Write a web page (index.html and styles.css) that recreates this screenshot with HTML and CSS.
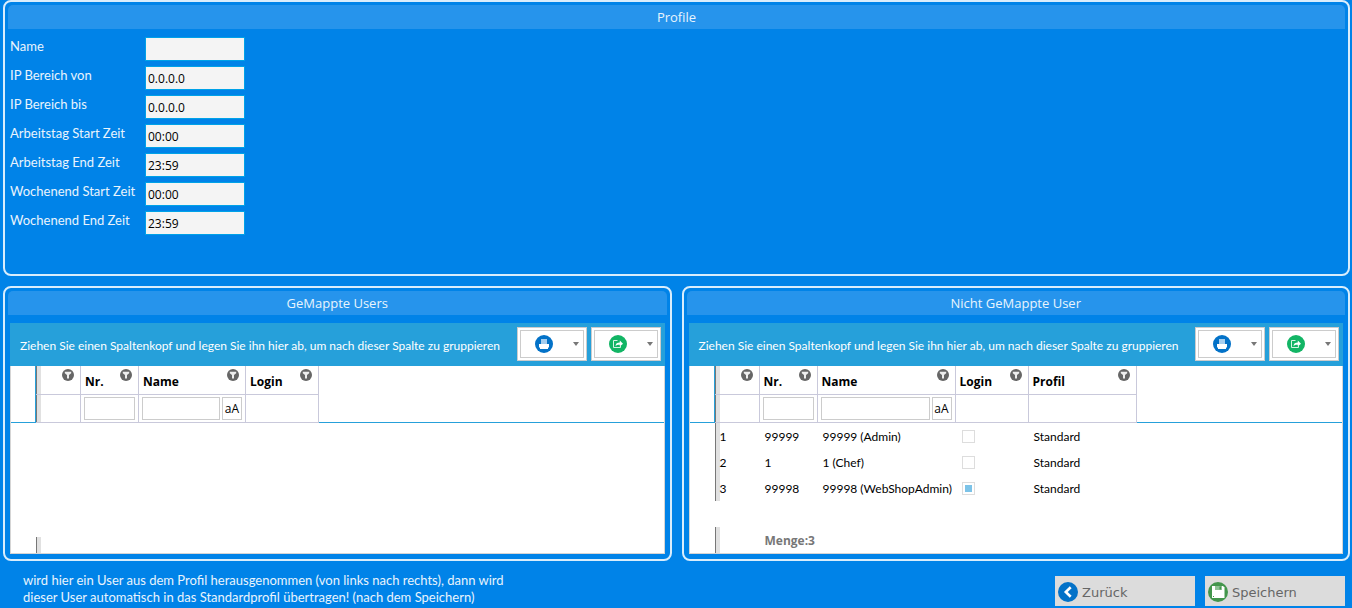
FILE: index.html
```html
<!DOCTYPE html>
<html lang="de">
<head>
<meta charset="utf-8">
<title>Profile</title>
<link rel="stylesheet" href="styles.css">
</head>
<body>
<svg class="sprites" aria-hidden="true">
  <symbol id="i-filter" viewBox="0 0 12 12"><circle cx="6" cy="6" r="6" fill="#666"/><path d="M2.8 2.8h6.400v1.400L7 6v3.400H5V6L2.800 4.200z" fill="#eee"/></symbol>
  <symbol id="i-print" viewBox="0 0 18 18"><circle cx="9" cy="9" r="9" fill="#0372c8"/><path d="M6 4h6v5H6z" fill="#a5cdee"/><path d="M4 9h10v3.500H13V14H5v-1.500H4z" fill="#fff"/></symbol>
  <symbol id="i-export" viewBox="0 0 18 18"><circle cx="9" cy="9" r="9" fill="#12b565"/><path d="M8.500 5.500h-4v7h7v-1.500" fill="none" stroke="#d5f3e3"/><path d="M6.500 11c.2-2.500 1.700-3.600 4.300-3.600V5.600L14 8.800l-3.200 2.800V9.700C8.900 9.600 7.700 9.900 6.500 11z" fill="#fff"/></symbol>
  <symbol id="i-back" viewBox="0 0 20 20"><circle cx="10" cy="10" r="10" fill="#0372c8"/><path d="M12.700 5.200 7.800 10l4.900 4.800" fill="none" stroke="#fff" stroke-width="2.600"/></symbol>
  <symbol id="i-save" viewBox="0 0 20 20"><circle cx="10" cy="10" r="10" fill="#43964c"/><path d="M4 4h11l1.500 1.500V16H4z" fill="#fff"/><path d="M7 4h7v4H7z" fill="#8fc295"/><path d="M11.500 4.500h1.500v3h-1.500z" fill="#43964c"/><path d="M5 14h1v1H5z" fill="#43964c"/></symbol>
</svg>
<main class="page">
  <section class="panel">
    <h1 class="panel-title">Profile</h1>
    <form class="fields">
      <label for="name">Name</label><input id="name" type="text">
      <label for="ip-from">IP Bereich von</label><input id="ip-from" type="text" value="0.0.0.0">
      <label for="ip-to">IP Bereich bis</label><input id="ip-to" type="text" value="0.0.0.0">
      <label for="work-start">Arbeitstag Start Zeit</label><input id="work-start" type="text" value="00:00">
      <label for="work-end">Arbeitstag End Zeit</label><input id="work-end" type="text" value="23:59">
      <label for="weekend-start">Wochenend Start Zeit</label><input id="weekend-start" type="text" value="00:00">
      <label for="weekend-end">Wochenend End Zeit</label><input id="weekend-end" type="text" value="23:59">
    </form>
  </section>

  <div class="columns">
    <section class="panel">
      <h2 class="panel-title">GeMappte Users</h2>
      <div class="grid">
        <div class="group-bar">
          <span>Ziehen Sie einen Spaltenkopf und legen Sie ihn hier ab, um nach dieser Spalte zu gruppieren</span>
          <button class="tool" type="button" aria-label="Drucken"><span class="tool-face"><svg class="tool-icon"><use href="#i-print"/></svg><span class="caret"></span></span></button>
          <button class="tool" type="button" aria-label="Exportieren"><span class="tool-face"><svg class="tool-icon"><use href="#i-export"/></svg><span class="caret"></span></span></button>
        </div>
        <table class="table">
          <colgroup><col class="c-gutter"><col class="c-handle"><col class="c-nr"><col class="c-name"><col class="c-login"><col></colgroup>
          <thead>
            <tr class="head">
              <td class="gutter" rowspan="2"></td>
              <th class="handle"><span class="head-cell"><svg class="funnel"><use href="#i-filter"/></svg></span></th>
              <th><span class="head-cell">Nr.<svg class="funnel"><use href="#i-filter"/></svg></span></th>
              <th><span class="head-cell">Name<svg class="funnel"><use href="#i-filter"/></svg></span></th>
              <th><span class="head-cell">Login<svg class="funnel"><use href="#i-filter"/></svg></span></th>
              <td class="rest" rowspan="2"></td>
            </tr>
            <tr class="filter">
              <td class="handle"></td>
              <td><span class="filter-cell"><input type="text" aria-label="Filter Nr."></span></td>
              <td><span class="filter-cell"><input type="text" aria-label="Filter Name"><button type="button">aA</button></span></td>
              <td></td>
            </tr>
          </thead>
        </table>
        <div class="summary summary-empty"></div>
      </div>
    </section>

    <section class="panel">
      <h2 class="panel-title">Nicht GeMappte User</h2>
      <div class="grid">
        <div class="group-bar">
          <span>Ziehen Sie einen Spaltenkopf und legen Sie ihn hier ab, um nach dieser Spalte zu gruppieren</span>
          <button class="tool" type="button" aria-label="Drucken"><span class="tool-face"><svg class="tool-icon"><use href="#i-print"/></svg><span class="caret"></span></span></button>
          <button class="tool" type="button" aria-label="Exportieren"><span class="tool-face"><svg class="tool-icon"><use href="#i-export"/></svg><span class="caret"></span></span></button>
        </div>
        <table class="table">
          <colgroup><col class="c-gutter"><col class="c-handle"><col class="c-nr"><col class="c-name-wide"><col class="c-login"><col class="c-profile"><col></colgroup>
          <thead>
            <tr class="head">
              <td class="gutter" rowspan="2"></td>
              <th class="handle"><span class="head-cell"><svg class="funnel"><use href="#i-filter"/></svg></span></th>
              <th><span class="head-cell">Nr.<svg class="funnel"><use href="#i-filter"/></svg></span></th>
              <th><span class="head-cell">Name<svg class="funnel"><use href="#i-filter"/></svg></span></th>
              <th><span class="head-cell">Login<svg class="funnel"><use href="#i-filter"/></svg></span></th>
              <th><span class="head-cell">Profil<svg class="funnel"><use href="#i-filter"/></svg></span></th>
              <td class="rest" rowspan="2"></td>
            </tr>
            <tr class="filter">
              <td class="handle"></td>
              <td><span class="filter-cell"><input type="text" aria-label="Filter Nr."></span></td>
              <td><span class="filter-cell"><input type="text" aria-label="Filter Name"><button type="button">aA</button></span></td>
              <td></td>
              <td></td>
            </tr>
          </thead>
          <tbody>
            <tr><td></td><td class="handle">1</td><td>99999</td><td>99999 (Admin)</td><td><input type="checkbox" aria-label="Login 99999"></td><td>Standard</td><td></td></tr>
            <tr><td></td><td class="handle">2</td><td>1</td><td>1 (Chef)</td><td><input type="checkbox" aria-label="Login 1"></td><td>Standard</td><td></td></tr>
            <tr><td></td><td class="handle">3</td><td>99998</td><td>99998 (WebShopAdmin)</td><td><input type="checkbox" aria-label="Login 99998" checked></td><td>Standard</td><td></td></tr>
          </tbody>
        </table>
        <div class="summary">Menge:3</div>
      </div>
    </section>
  </div>

  <footer class="footer">
    <p class="hint">wird hier ein User aus dem Profil herausgenommen (von links nach rechts), dann wird<br>dieser User automatisch in das Standardprofil übertragen! (nach dem Speichern)</p>
    <button class="action" type="button"><svg class="action-icon"><use href="#i-back"/></svg>Zurück</button>
    <button class="action" type="button"><svg class="action-icon"><use href="#i-save"/></svg>Speichern</button>
  </footer>
</main>
</body>
</html>
```
FILE: styles.css
```css
* { box-sizing: border-box; }
body {
  margin: 0;
  background: #0083e8;
  color: #e9f4fd;
  font: 12px/17px "Open Sans", sans-serif;
}
input, button { font: inherit; margin: 0; padding: 0; border-radius: 0; }
.sprites { display: none; }
svg { display: block; flex: none; }

.page {
  display: flex;
  flex-direction: column;
  gap: 10px;
  min-height: 100vh;
  padding: 0 2px 2px 3px;
}
.panel {
  flex: 1;
  display: flex;
  flex-direction: column;
  min-width: 0;
  min-height: 276px;
  padding: 3px;
  border: 2px solid #d9edfc;
  border-radius: 8px;
}
.panel-title {
  flex: none;
  margin: 0;
  border-radius: 5px 5px 0 0;
  background: #2694ec;
  font-size: 13px;
  font-weight: 400;
  line-height: 24px;
  text-align: center;
}
.fields {
  display: grid;
  grid-template-columns: 135px 100px;
  row-gap: 5px;
  padding: 8px 2px;
}
.fields label, .hint { font-family: Lato, sans-serif; font-size: 13px; }
.fields label { line-height: 18px; }
.fields input {
  width: 100%;
  height: 24px;
  padding: 1px 2px 0;
  border: 1px solid #00a2e8;
  background: #f4f4f4;
  color: #000;
}

.columns { display: flex; gap: 10px; flex: 1; }
.columns .panel { min-height: 275px; }

.grid {
  flex: 1;
  display: flex;
  flex-direction: column;
  margin: 8px 2px 2px;
  border: 1px solid #d5d5d5;
  border-top: 0;
  background: #fff;
  color: #000;
}
.group-bar {
  display: flex;
  align-items: center;
  gap: 4px;
  height: 43px;
  margin: 0 -1px;
  padding: 0 4px 1px 10px;
  background: #26a0da;
  color: #fff;
  font-family: Lato, sans-serif;
}
.group-bar > span { flex: 1; min-width: 0; padding-top: 3px; white-space: nowrap; }
.tool {
  flex: none;
  width: 70px;
  height: 34px;
  padding: 2px;
  border: 1px solid #ccc;
  background: #fff;
}
.tool-face {
  display: flex;
  align-items: center;
  justify-content: space-between;
  height: 100%;
  padding: 0 4px 0 14px;
  border: 1px solid #ccc;
}
.tool-icon { width: 18px; height: 18px; }
.caret {
  border: 3px solid transparent;
  border-top: 4px solid #777;
  border-bottom: 0;
}

.table {
  width: 100%;
  table-layout: fixed;
  border-collapse: separate;
  border-spacing: 0;
}
.c-gutter { width: 25px; }
.c-handle { width: 45px; }
.c-nr { width: 58px; }
.c-name { width: 107px; }
.c-name-wide { width: 138px; }
.c-login { width: 73px; }
.c-profile { width: 108px; }
.table th, .table td { padding: 0; text-align: left; white-space: nowrap; }
.table thead th, .table .filter td {
  border-right: 1px solid #c9c9db;
  border-bottom: 1px solid #c9c9db;
}
.table .handle, .summary::before {
  background: linear-gradient(90deg, #777 1px, #e1e1e1 1px 5px, transparent 5px);
}
.table .gutter { border-right: 1px solid #26a0da; border-bottom: 1px solid #26a0da; }
.table .rest { border-bottom: 1px solid #26a0da; }
.head { height: 29px; }
.filter { height: 28px; }
.head-cell {
  display: flex;
  justify-content: space-between;
  height: 28px;
  padding: 3px 6px 0 4px;
  line-height: 26px;
}
.handle .head-cell { justify-content: flex-end; }
.funnel { width: 12px; height: 12px; }
.filter-cell { display: flex; gap: 2px; height: 23px; padding: 0 3px; }
.filter-cell input { flex: 1; min-width: 0; border: 1px solid #ccc; }
.filter-cell button {
  width: 20px;
  border: 1px solid #ccc;
  background: #fff;
  color: #000;
}
.table tbody td { height: 26px; padding: 1px 0 0 5px; font-family: Lato, sans-serif; }
.table input[type="checkbox"] {
  display: block;
  appearance: none;
  width: 13px;
  height: 13px;
  margin-left: 1px;
  border: 1px solid #ddd;
  background: #fff;
}
.table input[type="checkbox"]:checked {
  background: #7cc3e8 content-box;
  padding: 2px;
}
.summary {
  display: flex;
  align-items: center;
  height: 26px;
  margin-top: auto;
  color: #777;
  font-weight: 700;
}
.summary::before { content: ""; width: 50px; height: 100%; margin-left: 25px; }
.summary-empty { height: 16px; }

.footer {
  display: flex;
  align-items: flex-end;
  gap: 10px;
  padding: 1px 5px 0 20px;
}
.hint { flex: 1; margin: 0; }
.action {
  display: flex;
  align-items: center;
  gap: 4px;
  width: 140px;
  height: 30px;
  padding: 2px 3px 0;
  border: 0;
  background: #dcdcdc;
  color: #666;
  font-family: "DejaVu Sans", sans-serif;
  font-size: 13px;
}
.action-icon { width: 20px; height: 20px; }
```
